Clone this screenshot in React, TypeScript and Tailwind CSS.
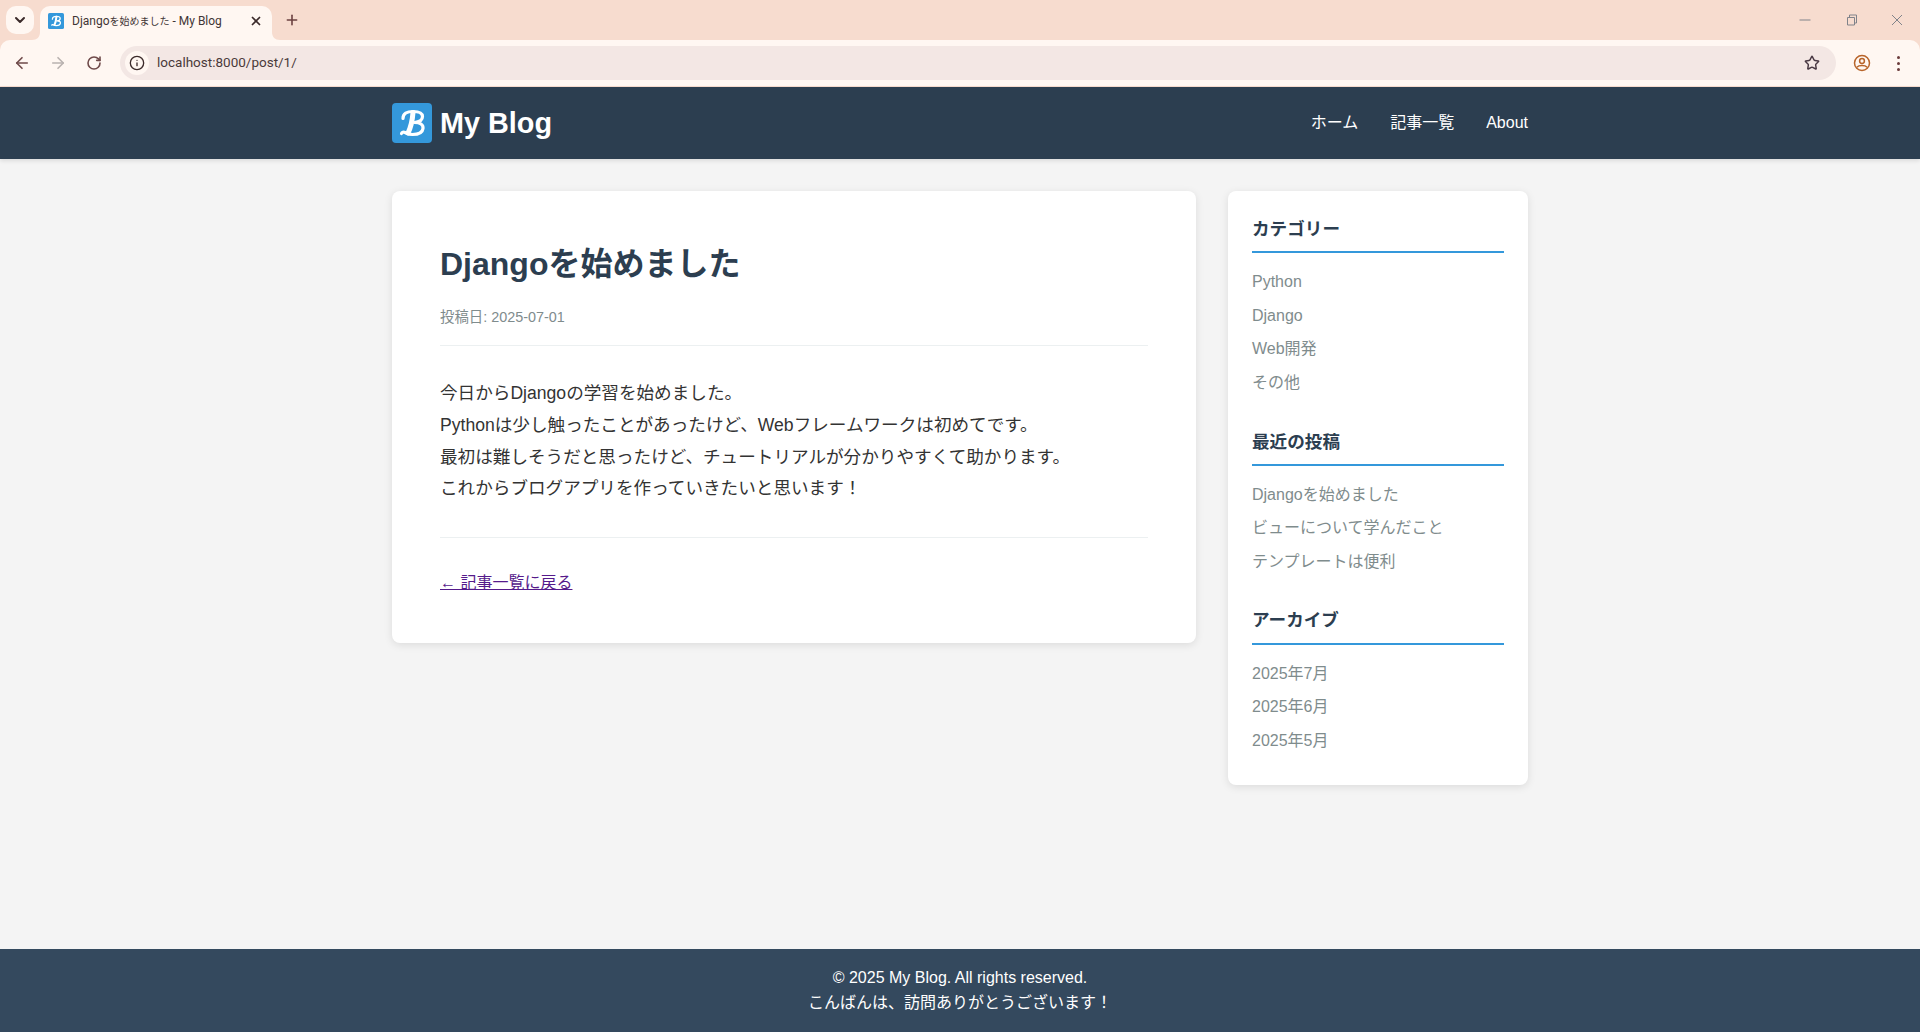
import { ArrowLeft, ArrowRight, ChevronDown, Info, Plus, RotateCw, Star, X } from 'lucide-react';

const sections = [
  { title: 'カテゴリー', links: ['Python', 'Django', 'Web開発', 'その他'] },
  { title: '最近の投稿', links: ['Djangoを始めました', 'ビューについて学んだこと', 'テンプレートは便利'] },
  { title: 'アーカイブ', links: ['2025年7月', '2025年6月', '2025年5月'] },
];

function LogoMark({ className }: { className: string }) {
  return (
    <svg viewBox="0 0 40 40" className={className}>
      <rect width="40" height="40" rx="4" fill="#3498db" />
      <path
        d="M11 15.5C11 10.5 15 8.5 21 8.5C27 8.5 30.5 10 30.5 13.5C30.5 17 27 19 22.5 19.5C28 19.5 31.5 21.5 31 25.5C30.5 29.5 26 31.5 20.5 31.5C17 31.5 15 30.5 13 29.5C11.5 28.8 10 29.3 9.5 30.5"
        fill="none"
        stroke="#fff"
        strokeWidth="3.2"
        strokeLinecap="round"
        strokeLinejoin="round"
      />
      <path d="M21 9.5C20.5 16 19 24 16 30" fill="none" stroke="#fff" strokeWidth="5" strokeLinecap="round" />
    </svg>
  );
}

function BrowserChrome() {
  return (
    <div className="shrink-0 bg-[#f7dccf] font-['Roboto','Liberation_Sans','Noto_Sans_CJK_JP',sans-serif]">
      <div className="flex h-10 items-end pl-1.5">
        <div className="mb-1.5 flex h-7 w-7 items-center justify-center rounded-[10px] bg-[#fff7f2] text-[#3b2a2a]">
          <ChevronDown className="h-4 w-4" strokeWidth={3} />
        </div>
        <div className="relative ml-1.5 flex h-[34px] w-[232px] items-center rounded-t-[10px] bg-[#fff7f2] pb-[5px] pl-2 pr-[9px]">
          <svg viewBox="0 0 8 8" className="absolute bottom-0 -left-2 h-2 w-2">
            <path d="M8 0V8H0C5 8 8 5 8 0Z" fill="#fff7f2" />
          </svg>
          <svg viewBox="0 0 8 8" className="absolute bottom-0 -right-2 h-2 w-2">
            <path d="M0 0V8H8C3 8 0 5 0 0Z" fill="#fff7f2" />
          </svg>
          <LogoMark className="h-4 w-4 shrink-0" />
          <span className="ml-2 flex-1 truncate text-xs text-[#3f3535]">Django<span className="text-[10px]">を始めました</span> - My Blog</span>
          <X className="h-3.5 w-3.5 text-[#3b2a2a]" strokeWidth={3} />
        </div>
        <Plus className="mb-3 ml-3 h-4 w-4 text-[#6b4040]" strokeWidth={2.4} />
        <div className="ml-auto mb-3 flex items-center text-[#80838a]">
          <svg viewBox="0 0 46 16" className="h-4 w-[46px]">
            <path d="M17.5 8h11" stroke="currentColor" strokeWidth="1" />
          </svg>
          <svg viewBox="0 0 46 16" className="h-4 w-[46px]">
            <path d="M19.5 5.5h7v7.5h-7zM21.5 5.5v-2.5h7v8h-2" fill="none" stroke="currentColor" strokeWidth="1" />
          </svg>
          <svg viewBox="0 0 46 16" className="h-4 w-[46px]">
            <path d="M18 3l10 10M28 3L18 13" fill="none" stroke="currentColor" strokeWidth="1" />
          </svg>
        </div>
      </div>
      <div className="flex h-[46px] items-center rounded-t-[10px] bg-[#fff7f2] pl-[13px] pr-5">
        <ArrowLeft className="h-[18px] w-[18px] text-[#6f4a4a]" strokeWidth={2.2} />
        <ArrowRight className="ml-[18px] h-[18px] w-[18px] text-[#b9b2b0]" strokeWidth={2.2} />
        <RotateCw className="ml-[19px] h-4 w-4 text-[#6f4a4a]" strokeWidth={2.4} />
        <div className="ml-[18px] flex h-[34px] flex-1 items-center rounded-full bg-[#f3e7e4] pl-[5px] pr-4">
          <div className="flex h-6 w-6 items-center justify-center rounded-full bg-[#fff7f2]">
            <Info className="h-4 w-4 text-[#3b2a2a]" strokeWidth={2} />
          </div>
          <span className="ml-2 flex-1 text-[13.5px] text-[#4a3a3a]">localhost:8000/post/1/</span>
          <Star className="h-4 w-4 text-[#4a3a44]" strokeWidth={2.2} />
        </div>
        <svg viewBox="0 0 18 18" className="ml-[17px] h-[18px] w-[18px] text-[#b8642a]">
          <circle cx="9" cy="9" r="7.5" fill="none" stroke="currentColor" strokeWidth="1.5" />
          <circle cx="9" cy="7" r="2.4" fill="none" stroke="currentColor" strokeWidth="1.5" />
          <path d="M3.8 13.2C6 11 12 11 14.2 13.2" fill="none" stroke="currentColor" strokeWidth="1.5" />
        </svg>
        <div className="ml-[25px] flex w-1 flex-col items-center gap-[3px]">
          <span className="h-[3px] w-[3px] rounded-full bg-[#6b3b3b]" />
          <span className="h-[3px] w-[3px] rounded-full bg-[#6b3b3b]" />
          <span className="h-[3px] w-[3px] rounded-full bg-[#6b3b3b]" />
        </div>
      </div>
      <div className="h-px bg-[#f7dccf]" />
    </div>
  );
}

export default function App() {
  return (
    <div className="flex h-screen flex-col overflow-hidden bg-[#f4f4f4] font-['Liberation_Sans','Noto_Sans_CJK_JP',sans-serif] text-base leading-[1.6] text-[#333]">
      <BrowserChrome />

      <header className="relative shrink-0 bg-[#2c3e50] shadow-[0_2px_4px_rgba(0,0,0,0.1)]">
        <div className="mx-auto flex w-[1200px] items-center justify-between px-8 py-4">
          <a className="flex items-center gap-2">
            <LogoMark className="h-10 w-10" />
            <span className="text-[28.8px] leading-10 font-bold text-white">My Blog</span>
          </a>
          <nav className="flex gap-8 text-white">
            <a>ホーム</a>
            <a>記事一覧</a>
            <a>About</a>
          </nav>
        </div>
      </header>

      <main className="flex-1">
        <div className="mx-auto flex w-[1200px] items-start gap-8 px-8 pt-8">
          <article className="flex-1 rounded-lg bg-white p-12 shadow-[0_2px_8px_rgba(0,0,0,0.1)]">
            <div className="border-b border-[#ecf0f1] pb-4">
              <h1 className="mb-4 text-[32px] font-bold text-[#2c3e50]">Djangoを始めました</h1>
              <p className="text-[14.4px] text-[#7f8c8d]">投稿日: 2025-07-01</p>
            </div>
            <div className="mt-8 text-[17.6px] leading-[1.8]">
              <p>今日からDjangoの学習を始めました。</p>
              <p>Pythonは少し触ったことがあったけど、Webフレームワークは初めてです。</p>
              <p>最初は難しそうだと思ったけど、チュートリアルが分かりやすくて助かります。</p>
              <p>これからブログアプリを作っていきたいと思います！</p>
            </div>
            <div className="mt-8 border-t border-[#ecf0f1] pt-8">
              <a className="text-[#551a8b] underline">← 記事一覧に戻る</a>
            </div>
          </article>

          <aside className="flex w-[300px] shrink-0 flex-col gap-6 rounded-lg bg-white p-6 shadow-[0_2px_8px_rgba(0,0,0,0.1)]">
            {sections.map(section => (
              <section key={section.title}>
                <h3 className="mb-4 border-b-2 border-[#3498db] pb-2 text-[17.6px] font-bold text-[#2c3e50]">{section.title}</h3>
                <ul>
                  {section.links.map(link => (
                    <li key={link} className="mb-2 text-[#7f8c8d]">{link}</li>
                  ))}
                </ul>
              </section>
            ))}
          </aside>
        </div>
      </main>

      <footer className="shrink-0 bg-[#34495e] py-4 text-center text-white">
        <p>© 2025 My Blog. All rights reserved.</p>
        <p>こんばんは、訪問ありがとうございます！</p>
      </footer>
    </div>
  );
}
